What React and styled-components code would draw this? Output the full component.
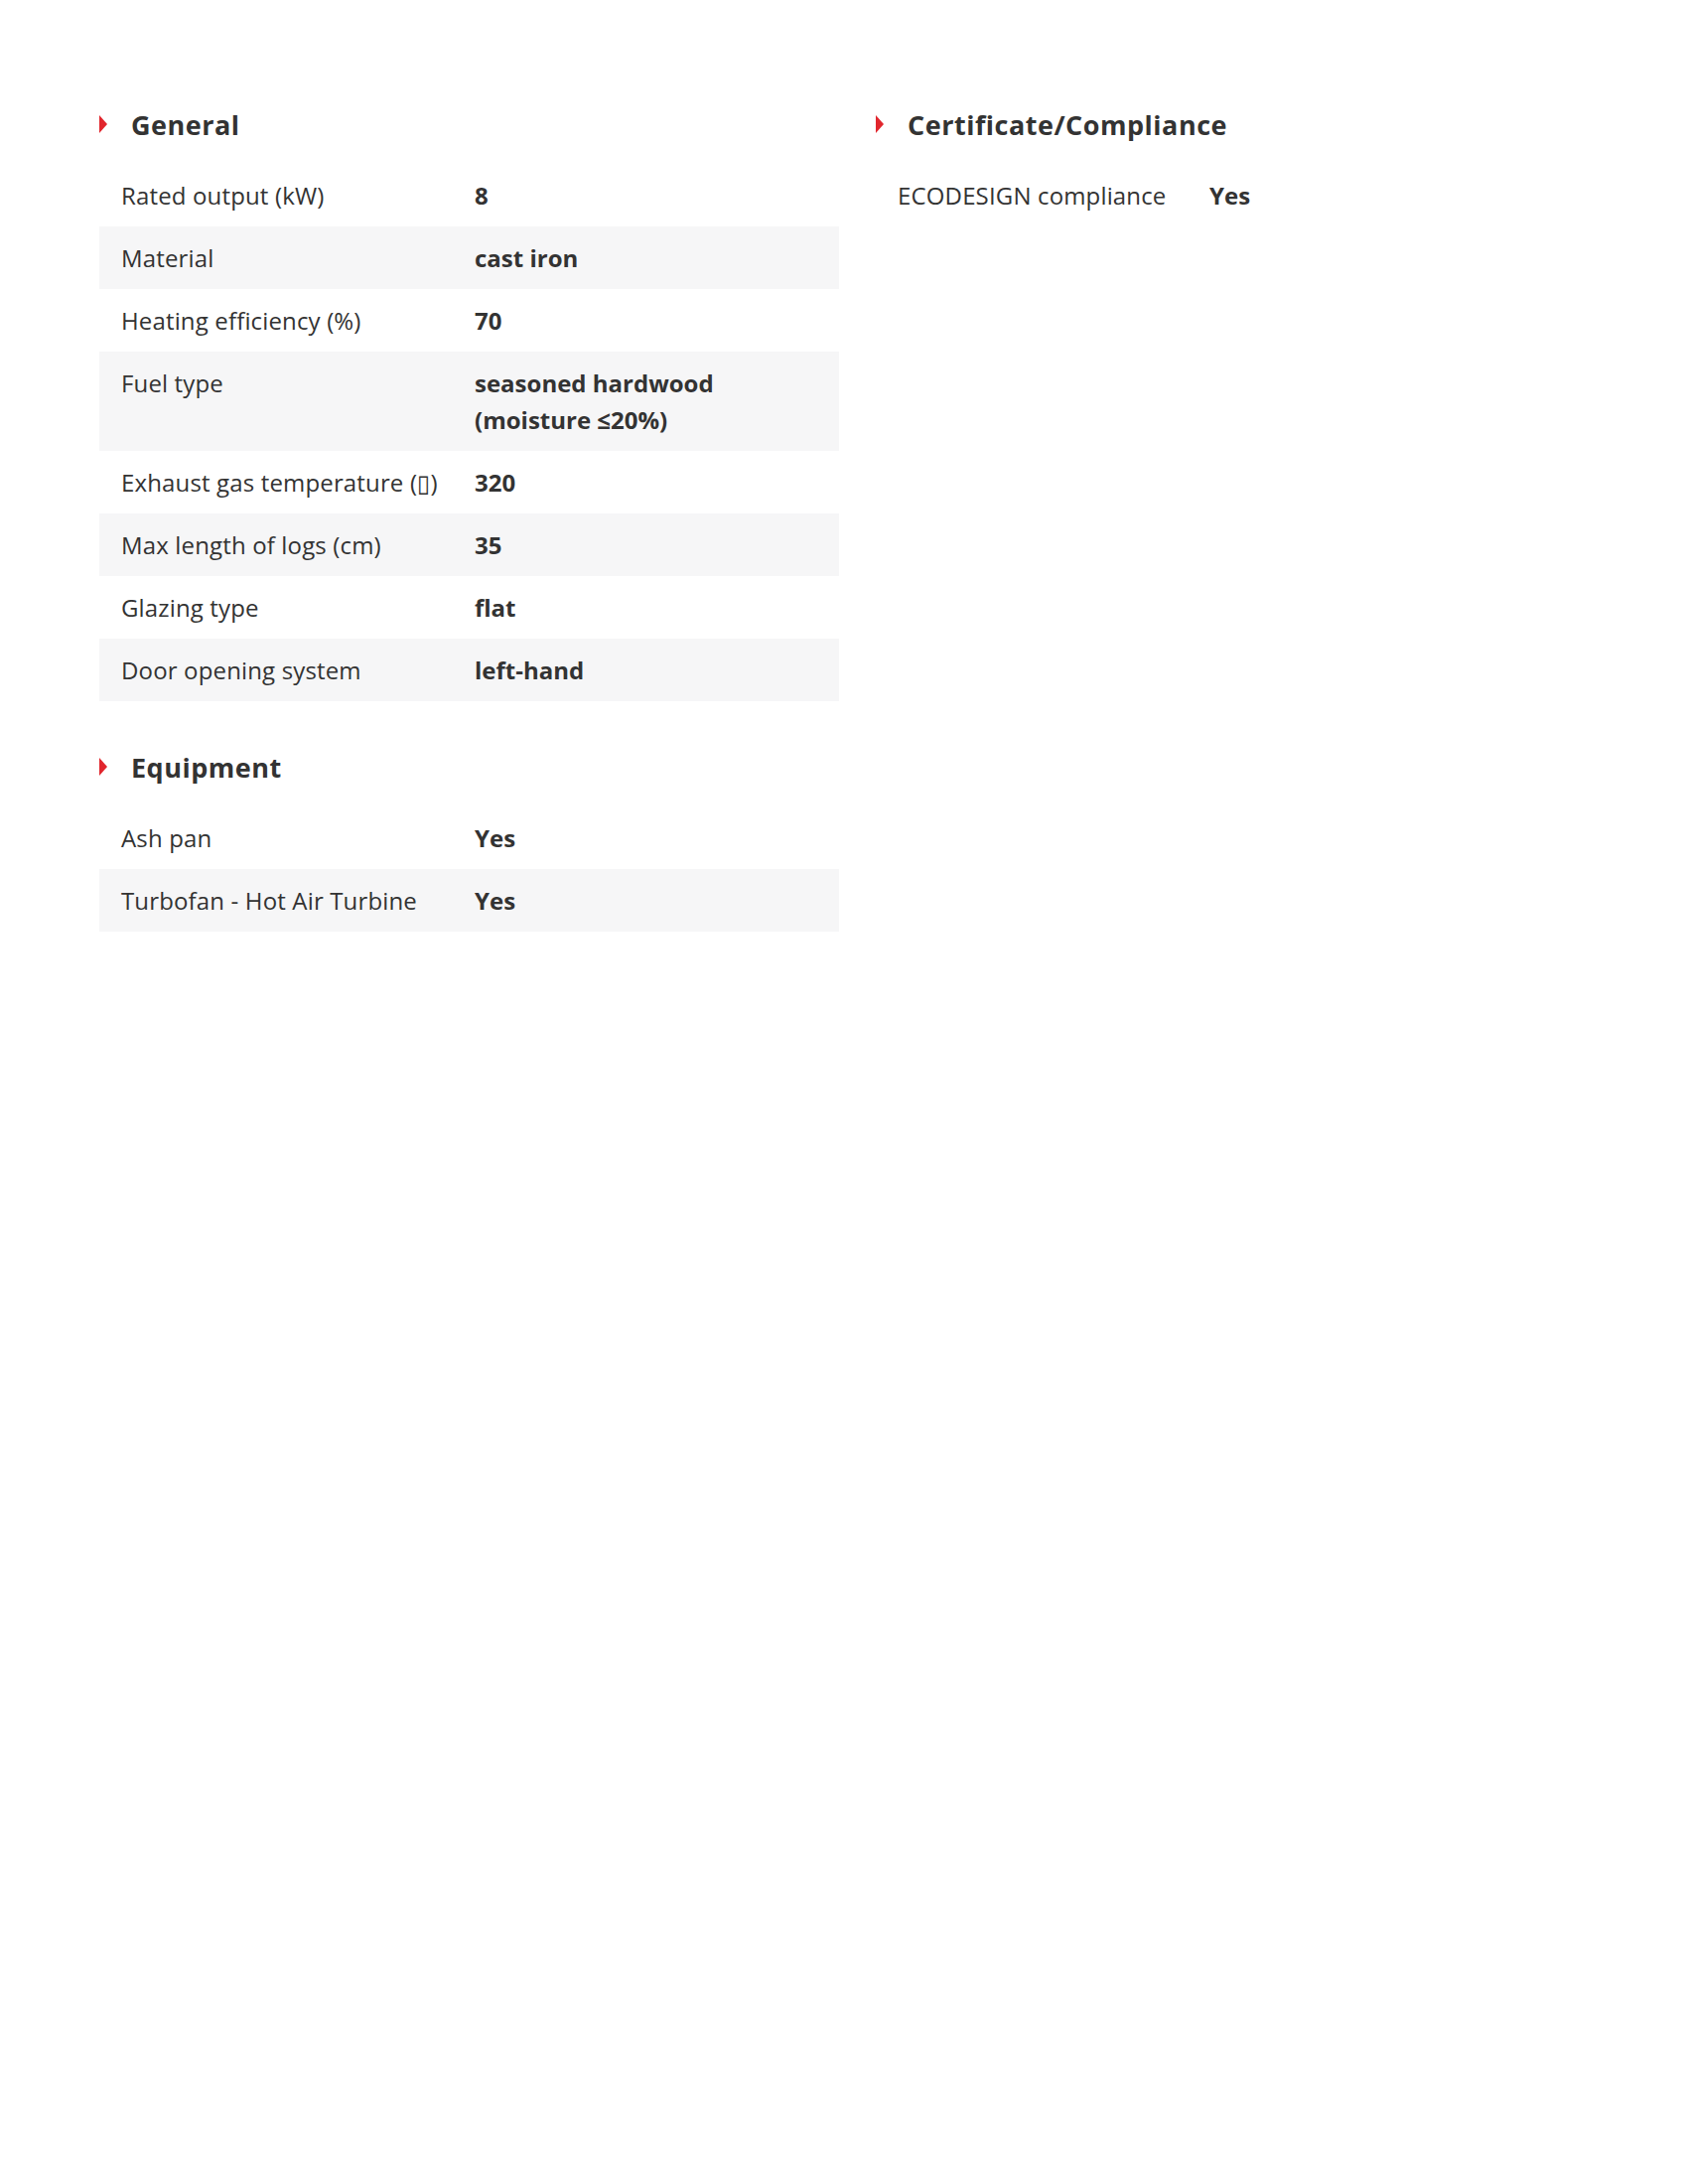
import React from "react";
import styled, { createGlobalStyle } from "styled-components";

const Global = createGlobalStyle`
  html, body { margin: 0; padding: 0; background: #ffffff; }
  body { font-family: "Open Sans", "DejaVu Sans", sans-serif; color: #333333; }
`;

const Page = styled.div`
  width: 1699px;
  min-height: 2199px;
  box-sizing: border-box;
  padding: 107px 100px 0 100px;
  display: grid;
  grid-template-columns: 745px 1fr;
  column-gap: 37px;
  align-items: start;
`;

const Column = styled.div`
  display: flex;
  flex-direction: column;
  gap: 48px;
`;

const Section = styled.section`
  display: flex;
  flex-direction: column;
  gap: 22px;
`;

const Heading = styled.h2`
  margin: 0;
  display: flex;
  align-items: center;
  gap: 24px;
  height: 36px;
  font-size: 27px;
  font-weight: 700;
  color: #333333;
  letter-spacing: 0.5px;
`;

const Marker = styled.span`
  width: 0;
  height: 0;
  border-top: 9.5px solid transparent;
  border-bottom: 9.5px solid transparent;
  border-left: 8px solid #e1262d;
  flex: none;
`;

const Table = styled.div`
  display: flex;
  flex-direction: column;
`;

const Row = styled.div`
  display: grid;
  grid-template-columns: ${(p) => p.$labelWidth}px 1fr;
  background: ${(p) => (p.$shaded ? "#f6f6f7" : "transparent")};
  font-size: 24px;
  line-height: 37px;
  padding: 13px 0;
`;

const Label = styled.div`
  padding-left: 22px;
  padding-right: 10px;
  font-weight: 400;
  color: #333333;
  letter-spacing: 0.15px;
  white-space: nowrap;
`;

const Value = styled.div`
  font-weight: 700;
  color: #333333;
  padding-right: 22px;
  white-space: pre-line;
`;

const general = [
  ["Rated output (kW)", "8"],
  ["Material", "cast iron"],
  ["Heating efficiency (%)", "70"],
  ["Fuel type", "seasoned hardwood\n(moisture ≤20%)"],
  ["Exhaust gas temperature (\u25AF)", "320"],
  ["Max length of logs (cm)", "35"],
  ["Glazing type", "flat"],
  ["Door opening system", "left-hand"],
];

const equipment = [
  ["Ash pan", "Yes"],
  ["Turbofan - Hot Air Turbine", "Yes"],
];

const compliance = [["ECODESIGN compliance", "Yes"]];

function SpecSection({ title, rows, labelWidth }) {
  return (
    <Section>
      <Heading>
        <Marker />
        {title}
      </Heading>
      <Table>
        {rows.map(([k, v], i) => (
          <Row key={k} $shaded={i % 2 === 1} $labelWidth={labelWidth}>
            <Label>{k}</Label>
            <Value>{v}</Value>
          </Row>
        ))}
      </Table>
    </Section>
  );
}

export default function App() {
  return (
    <>
      <Global />
      <Page>
        <Column>
          <SpecSection title="General" rows={general} labelWidth={378} />
          <SpecSection title="Equipment" rows={equipment} labelWidth={378} />
        </Column>
        <Column>
          <SpecSection title="Certificate/Compliance" rows={compliance} labelWidth={336} />
        </Column>
      </Page>
    </>
  );
}
